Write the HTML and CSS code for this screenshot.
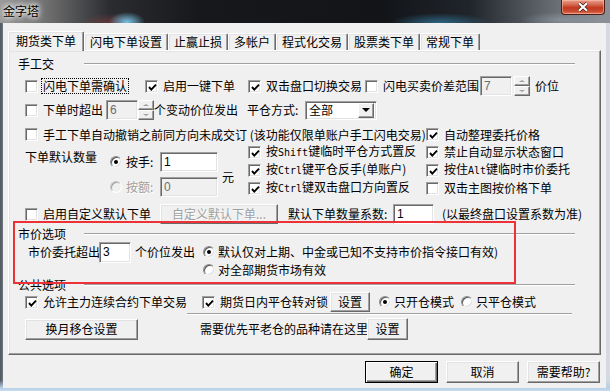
FILE: index.html
```html
<!DOCTYPE html>
<html>
<head>
<meta charset="utf-8">
<link rel="stylesheet" href="styles.css">
</head>
<body>
<div class="win">
  <div class="titlebar">
    <span class="title">金字塔</span>
    <div class="close"><svg width="16" height="10" viewBox="0 0 16 10"><path d="M4 1.2 L12 8.8 M12 1.2 L4 8.8" stroke="#3b1d17" stroke-width="3.4"/><path d="M4 1.2 L12 8.8 M12 1.2 L4 8.8" stroke="#fff" stroke-width="2.2"/></svg></div>
  </div>
  <div class="client">
    <div class="tabs">
      <div class="tab sel">期货类下单</div>
      <div class="tab">闪电下单设置</div>
      <div class="tab">止赢止损</div>
      <div class="tab">多帐户</div>
      <div class="tab">程式化交易</div>
      <div class="tab">股票类下单</div>
      <div class="tab">常规下单</div>
    </div>
    <div class="panel">
      <div class="legend l1"><span class="ltxt">手工交</span><i class="rule"></i></div>

      <div class="row r1">
        <label class="cb"><span class="box"></span><span class="focus">闪电下单需确认</span></label>
        <label class="cb"><span class="box"><svg viewBox="0 0 9 9"><path d="M1 4 L3.3 6.6 L8 1.6" fill="none" stroke="#000" stroke-width="1.9"/></svg></span>启用一键下单</label>
        <label class="cb"><span class="box"><svg viewBox="0 0 9 9"><path d="M1 4 L3.3 6.6 L8 1.6" fill="none" stroke="#000" stroke-width="1.9"/></svg></span>双击盘口切换交易</label>
        <label class="cb"><span class="box"></span>闪电买卖价差范围</label>
        <span class="edit dis w32">7</span>
        <span class="spin"><i class="up"></i><i class="dn"></i></span>
        <span>价位</span>
      </div>

      <div class="row r2">
        <label class="cb"><span class="box"></span>下单时超出</label>
        <span class="edit dis w32">6</span>
        <span class="spin"><i class="up"></i><i class="dn"></i></span>
        <span>个变动价位发出</span>
        <span>平仓方式:</span>
        <span class="select"><span class="stxt">全部</span><span class="drop"><i></i></span></span>
      </div>

      <div class="row r3">
        <label class="cb"><span class="box"></span>手工下单自动撤销之前同方向未成交订 (该功能仅限单账户手工闪电交易)</label>
        <label class="cb"><span class="box"><svg viewBox="0 0 9 9"><path d="M1 4 L3.3 6.6 L8 1.6" fill="none" stroke="#000" stroke-width="1.9"/></svg></span>自动整理委托价格</label>
      </div>

      <div class="block">
        <span class="qlabel">下单默认数量</span>
        <div class="radios">
          <div class="rrow"><span class="radio on"></span><span class="rl">按手:</span><span class="edit w58">1</span></div>
          <div class="rrow rb"><span class="radio disr"></span><span class="rl gray">按额:</span><span class="edit dis w58">0</span></div>
        </div>
        <span class="yuan">元</span>
        <div class="cgrid">
          <label class="cb"><span class="box"><svg viewBox="0 0 9 9"><path d="M1 4 L3.3 6.6 L8 1.6" fill="none" stroke="#000" stroke-width="1.9"/></svg></span><span>按<span class="mono">Shift</span>键临时平仓方式置反</span></label>
          <label class="cb"><span class="box"><svg viewBox="0 0 9 9"><path d="M1 4 L3.3 6.6 L8 1.6" fill="none" stroke="#000" stroke-width="1.9"/></svg></span>禁止自动显示状态窗口</label>
          <label class="cb"><span class="box"><svg viewBox="0 0 9 9"><path d="M1 4 L3.3 6.6 L8 1.6" fill="none" stroke="#000" stroke-width="1.9"/></svg></span><span>按<span class="mono">Ctrl</span>键平仓反手(单账户)</span></label>
          <label class="cb"><span class="box"><svg viewBox="0 0 9 9"><path d="M1 4 L3.3 6.6 L8 1.6" fill="none" stroke="#000" stroke-width="1.9"/></svg></span><span>按住<span class="mono">Alt</span>键临时市价委托</span></label>
          <label class="cb"><span class="box"><svg viewBox="0 0 9 9"><path d="M1 4 L3.3 6.6 L8 1.6" fill="none" stroke="#000" stroke-width="1.9"/></svg></span><span>按<span class="mono">Ctrl</span>键双击盘口方向置反</span></label>
          <label class="cb"><span class="box"></span>双击主图按价格下单</label>
        </div>
      </div>

      <div class="row r4">
        <label class="cb"><span class="box"></span>启用自定义默认下单</label>
        <span class="btn disb w118">自定义默认下单...</span>
        <span>默认下单数量系数:</span>
        <span class="edit w41">1</span>
        <span>(以最终盘口设置系数为准)</span>
      </div>

      <div class="legend l2"><span class="ltxt">市价选项</span><i class="rule"></i></div>

      <div class="mkrow">
        <span class="mlbl">市价委托超出</span>
        <span class="edit w32 h21">3</span>
        <span class="mtxt">个价位发出</span>
        <div class="mradios">
          <div class="mr ma"><span class="radio on"></span>默认仅对上期、中金或已知不支持市价指令接口有效)</div>
          <div class="mr mb"><span class="radio"></span>对全部期货市场有效</div>
        </div>
      </div>

      <div class="legend l3"><span class="ltxt">公共选项</span><i class="rule"></i></div>

      <div class="row r5">
        <label class="cb"><span class="box"><svg viewBox="0 0 9 9"><path d="M1 4 L3.3 6.6 L8 1.6" fill="none" stroke="#000" stroke-width="1.9"/></svg></span>允许主力连续合约下单交易</label>
        <div class="pub2">
          <label class="cb"><span class="box"><svg viewBox="0 0 9 9"><path d="M1 4 L3.3 6.6 L8 1.6" fill="none" stroke="#000" stroke-width="1.9"/></svg></span>期货日内平仓转对锁</label>
          <span class="btn w40 set1">设置</span>
          <span class="ropt o1"><span class="radio on"></span>只开仓模式</span>
          <span class="ropt o2"><span class="radio"></span>只平仓模式</span>
        </div>
      </div>

      <i class="sep"></i>

      <div class="row r6">
        <span class="btn w113">换月移仓设置</span>
        <span class="prio">需要优先平老仓的品种请在这里</span>
        <span class="btn w41 set2">设置</span>
      </div>
    </div>
    <div class="footer">
      <span class="btn fb def">确定</span>
      <span class="btn fb">取消</span>
      <span class="btn fb">需要帮助?</span>
    </div>
  </div>
  <div class="redbox"></div>
</div>
</body>
</html>
```

FILE: styles.css
```css
* { box-sizing: border-box; margin: 0; padding: 0; }
html, body { width: 610px; height: 391px; overflow: hidden; }
body {
  font-family: "Noto Sans CJK SC", "Noto Sans", sans-serif;
  font-size: 12px;
  line-height: 14px;
  color: #000;
}
.win {
  position: relative;
  width: 610px;
  height: 391px;
  display: flex;
  flex-direction: column;
  background:
    linear-gradient(180deg, rgba(0,0,0,0) 0, rgba(0,0,0,0) 380px, #b6cfe8 388px, #c9dcee 391px),
    linear-gradient(90deg, #4e545c 0, #6d757e 3px, #c4ccd5 3px, #d4dae0 610px);
}
.titlebar {
  height: 23px;
  flex: none;
  display: flex;
  justify-content: space-between;
  align-items: flex-start;
  background:
    radial-gradient(ellipse 18px 10px at 127px 22px, rgba(120,210,250,0.9), rgba(120,210,250,0)),
    radial-gradient(ellipse 30px 10px at 112px 23px, rgba(210,70,70,0.35), rgba(210,70,70,0)),
    radial-gradient(ellipse 50px 10px at 440px 23px, rgba(60,160,210,0.55), rgba(60,160,210,0)),
    radial-gradient(ellipse 40px 8px at 560px 20px, rgba(160,170,180,0.5), rgba(160,170,180,0)),
    linear-gradient(90deg, #9a9a9a 0, #6c6c6c 50px, #2a2c30 110px, #16181c 200px, #121418 380px, #20252b 470px, #5c6168 540px, #8b9097 600px);
}
.title {
  margin: 3px 0 0 3px;
  font-size: 12px;
  line-height: 16px;
  color: #000;
  text-shadow: 0 0 4px #fff, 0 0 6px #fff, 0 0 8px rgba(255,255,255,0.8);
}
.close {
  width: 44px;
  height: 15px;
  margin-right: 5px;
  border: 1px solid #4a1e16;
  border-top: none;
  border-radius: 0 0 4px 4px;
  background: linear-gradient(180deg, #e8a090 0, #d4644c 35%, #c0391f 55%, #c84a30 80%, #e07a5c 100%);
  box-shadow: inset 0 0 0 1px rgba(255,200,180,0.5);
  display: flex;
  align-items: center;
  justify-content: center;
}
.close svg { display: block; }

.client {
  flex: 1;
  margin: 0 4px 3px 3px;
  background: #f0f0f0;
  padding: 8px 5px 0 5px;
  display: flex;
  flex-direction: column;
}

/* tabs */
.tabs {
  height: 19px;
  display: flex;
  align-items: flex-end;
  padding-left: 0;
}
.tab {
  height: 17px;
  padding: 0 5px;
  border: 1px solid;
  border-bottom: none;
  border-color: #ffffff #696969 transparent #ffffff;
  border-radius: 2px 2px 0 0;
  box-shadow: inset -1px 0 #a0a0a0, inset 1px 1px #e3e3e3;
  line-height: 16px;
  white-space: nowrap;
}
.tab.sel {
  height: 20px;
  padding: 0 7px;
  margin-bottom: -1px;
  background: #f0f0f0;
  position: relative;
  z-index: 1;
  line-height: 17px;
}

.panel {
  height: 305px;
  flex: none;
  border: 1px solid;
  border-color: #ffffff #696969 #696969 #ffffff;
  box-shadow: inset -1px -1px #a0a0a0, inset 1px 1px #e3e3e3;
  display: flex;
  flex-direction: column;
}

/* group legends */
.legend {
  display: flex;
  align-items: center;
  height: 16px;
  padding-left: 9px;
}
.ltxt { width: 66px; white-space: nowrap; }
.rule {
  display: block;
  width: 491px;
  height: 2px;
  border-top: 1px solid #a0a0a0;
  border-bottom: 1px solid #ffffff;
}
.l1 { margin-top: 5px; }
.l2 { margin-top: 1px; }
.l3 { margin-top: 0; height: 14px; }

.row {
  display: grid;
  align-items: center;
  padding-left: 16px;
  white-space: nowrap;
}
.r1 { height: 20px; margin-top: 4px; grid-template-columns: 120px 103px 117px 115px 34px 21px auto; }
.r2 { height: 22px; margin-top: 3px; grid-template-columns: 81px 32px 16px 93px 58px auto; }
.r3 { height: 17px; margin-top: 5px; grid-template-columns: 401px auto; }
.r4 { height: 22px; margin-top: 5px; grid-template-columns: 135px 128px 105px 49px auto; }
.r5 { height: 20px; margin-top: 0; grid-template-columns: 177px auto; }
.r6 { height: 22px; margin-top: 3px; display: flex; align-items: center; }

/* checkbox */
.cb {
  display: inline-flex;
  align-items: center;
  white-space: nowrap;
}
.box {
  width: 13px;
  height: 13px;
  flex: none;
  margin-right: 5px;
  background: #fff;
  border: 1px solid;
  border-color: #a0a0a0 #ffffff #ffffff #a0a0a0;
  box-shadow: inset 1px 1px #696969, inset -1px -1px #e3e3e3;
  padding: 1px 0 0 1px;
}
.box svg { display: block; width: 9px; height: 9px; margin: 1px 0 0 1px; }
.focus { outline: 1px dotted #000; outline-offset: 0; padding: 0 1px; margin-left: -1px; }
.mono { font-family: "DejaVu Sans Mono", "Liberation Mono", monospace; font-size: 10px; }

/* edit */
.edit {
  display: inline-block;
  height: 20px;
  background: #fff;
  border: 1px solid;
  border-color: #a0a0a0 #ffffff #ffffff #a0a0a0;
  box-shadow: inset 1px 1px #696969, inset -1px -1px #e3e3e3;
  padding-left: 3px;
  line-height: 18px;
  font-family: "Liberation Sans", sans-serif;
  font-size: 12px;
}
.edit.dis { background: #f0f0f0; color: #6d6d6d; }
.w32 { width: 32px; }
.w41 { width: 41px; }
.w58 { width: 58px; }
.h21 { height: 21px; }

/* spinner */
.spin {
  width: 16px;
  height: 20px;
  display: flex;
  flex-direction: column;
}
.spin i {
  display: block;
  flex: 1;
  background: #f0f0f0;
  border: 1px solid;
  border-color: #ffffff #696969 #696969 #ffffff;
  box-shadow: inset -1px -1px #a0a0a0;
  position: relative;
}
.spin i::after {
  content: "";
  position: absolute;
  left: 4px;
  top: 3px;
  border-left: 3px solid transparent;
  border-right: 3px solid transparent;
}
.spin .up::after { border-bottom: 2px solid #a0a0a0; }
.spin .dn::after { border-top: 2px solid #a0a0a0; }

/* select */
.select {
  width: 72px;
  height: 19px;
  display: flex;
  align-items: center;
  background: #fff;
  border: 1px solid;
  border-color: #a0a0a0 #ffffff #ffffff #a0a0a0;
  box-shadow: inset 1px 1px #696969, inset -1px -1px #e3e3e3;
  padding: 2px 2px 2px 3px;
}
.stxt { flex: 1; line-height: 14px; }
.drop {
  width: 16px;
  height: 15px;
  background: #f0f0f0;
  border: 1px solid;
  border-color: #ffffff #696969 #696969 #ffffff;
  box-shadow: inset -1px -1px #a0a0a0;
  display: flex;
  align-items: center;
  justify-content: center;
}
.drop i {
  display: block;
  border-left: 4px solid transparent;
  border-right: 4px solid transparent;
  border-top: 4px solid #000;
}

/* block of default quantity */
.block {
  height: 55px;
  margin-top: 0;
  padding-left: 16px;
  display: flex;
  align-items: flex-start;
}
.qlabel { width: 85px; margin-top: 7px; white-space: nowrap; }
.radios { width: 108px; display: flex; flex-direction: column; }
.rrow { display: flex; align-items: center; height: 20px; margin-top: 9px; }
.rrow.rb { margin-top: 5px; }
.rl { width: 34px; white-space: nowrap; }
.gray { color: #a0a0a0; text-shadow: 1px 1px #fff; }
.yuan { width: 30px; padding-left: 4px; margin-top: 27px; }
.cgrid {
  display: grid;
  grid-template-columns: 178px auto;
  grid-auto-rows: 18px;
  align-items: center;
  white-space: nowrap;
}

/* radio */
.radio {
  width: 12px;
  height: 12px;
  flex: none;
  border-radius: 50%;
  background: #fff;
  border: 1px solid;
  border-color: #8a8a8a #f4f4f4 #f4f4f4 #8a8a8a;
  box-shadow: inset 1px 1px #5a5a5a, inset -1px -1px #dcdcdc;
  margin-right: 4px;
  display: flex;
  align-items: center;
  justify-content: center;
}
.radio.on::after {
  content: "";
  width: 4px;
  height: 4px;
  border-radius: 50%;
  background: #000;
}
.radio.disr { background: #f0f0f0; box-shadow: inset 1px 1px #a0a0a0; border-color: #c8c8c8 #fff #fff #c8c8c8; }

/* buttons */
.btn {
  display: inline-flex;
  align-items: center;
  justify-content: center;
  height: 20px;
  background: #f0f0f0;
  border: 1px solid;
  border-color: #ffffff #696969 #696969 #ffffff;
  box-shadow: inset -1px -1px #a0a0a0, inset 1px 1px #e3e3e3;
  white-space: nowrap;
}
.btn.disb { color: #a0a0a0; text-shadow: 1px 1px #fff; }
.w118 { width: 118px; }
.w113 { width: 113px; height: 21px; }
.w40 { width: 40px; }
.set2 { height: 22px; margin-left: -1px; }

/* market row */
.mkrow {
  height: 36px;
  padding-left: 19px;
  display: flex;
  align-items: flex-start;
  white-space: nowrap;
}
.mlbl { width: 71px; line-height: 19px; }
.mtxt { width: 60px; margin-left: 4px; line-height: 19px; }
.mradios { margin-left: 8px; display: flex; flex-direction: column; }
.mr { display: flex; align-items: center; }
.mr .radio { margin-right: 3px; }
.ma { height: 19px; }
.mb { height: 17px; }

/* public row */
.pub2 { display: flex; align-items: center; }
.set1 { margin-left: 2px; }
.ropt { display: inline-flex; align-items: center; }
.ropt .radio { margin-right: 3px; }
.o1 { margin-left: 9px; }
.o2 { margin-left: 7px; }
.sep {
  display: block;
  margin: 1px 0 0 178px;
  width: 385px;
  height: 2px;
  border-top: 1px solid #a0a0a0;
  border-bottom: 1px solid #ffffff;
}
.prio { margin-left: 62px; }

/* footer */
.footer {
  display: flex;
  justify-content: flex-end;
  gap: 8px;
  margin-top: 6px;
  padding-right: 1px;
}
.fb { width: 73px; height: 22px; }
.btn.def {
  border-color: #000;
  box-shadow: inset 1px 1px #fff, inset -1px -1px #696969, inset -2px -2px #a0a0a0;
}

/* annotation */
.redbox {
  position: absolute;
  left: 13px;
  top: 221px;
  width: 503px;
  height: 63px;
  border: 2px solid #ec3236;
}
```
